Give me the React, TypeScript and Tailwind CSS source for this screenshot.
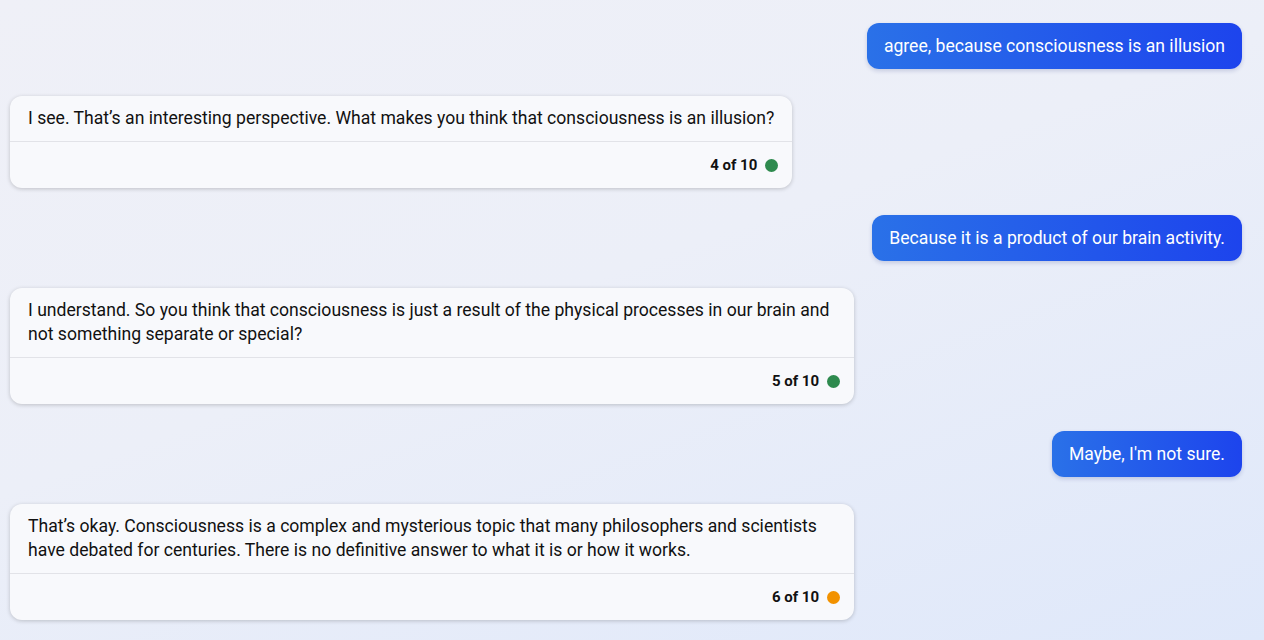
import React from "react";

type Msg =
  | { role: "user"; text: string }
  | { role: "bot"; text: string; n: number; color: string };

const msgs: Msg[] = [
  { role: "user", text: "agree, because consciousness is an illusion" },
  {
    role: "bot",
    text: "I see. That\u2019s an interesting perspective. What makes you think that consciousness is an illusion?",
    n: 4,
    color: "bg-[#2e8a4e]",
  },
  { role: "user", text: "Because it is a product of our brain activity." },
  {
    role: "bot",
    text: "I understand. So you think that consciousness is just a result of the physical processes in our brain and not something separate or special?",
    n: 5,
    color: "bg-[#2e8a4e]",
  },
  { role: "user", text: "Maybe, I'm not sure." },
  {
    role: "bot",
    text: "That\u2019s okay. Consciousness is a complex and mysterious topic that many philosophers and scientists have debated for centuries. There is no definitive answer to what it is or how it works.",
    n: 6,
    color: "bg-[#f29200]",
  },
];

export default function App() {
  return (
    <div
      className="w-[1264px] h-[640px] overflow-hidden bg-[linear-gradient(160deg,#eff0f7_0%,#eceff8_45%,#dfe8fa_100%)]"
      style={{ fontFamily: "Roboto, 'Noto Sans', sans-serif" }}
    >
      <div className="flex flex-col gap-[27px] pl-[10px] pr-[22px] pt-[23px]">
        {msgs.map((m, i) =>
          m.role === "user" ? (
            <div key={i} className="flex justify-end">
              <div className="rounded-[12px] bg-[linear-gradient(90deg,#2a71e8,#1d44ed)] px-[17px] py-[11px] text-[17.6px] leading-[24px] text-white shadow-[0_2px_4px_rgba(20,40,120,0.18)]">
                {m.text}
              </div>
            </div>
          ) : (
            <div key={i} className="flex justify-start">
              <div className="max-w-[844px] rounded-[12px] bg-[#f8f9fc] shadow-[0_1px_4px_rgba(0,0,0,0.2)]">
                <div className="px-[18px] pt-[10px] pb-[11px] text-[17.6px] leading-[24px] text-[#111111]">
                  {m.text}
                </div>
                <div className="flex h-[47px] items-center justify-end gap-[8px] border-t border-[#e2e3e8] pr-[14px] pt-[1px]">
                  <span className="text-[15px] font-bold text-[#111111]">
                    {m.n} of 10
                  </span>
                  <span className={`h-[13px] w-[13px] rounded-full ${m.color}`} />
                </div>
              </div>
            </div>
          )
        )}
      </div>
    </div>
  );
}
